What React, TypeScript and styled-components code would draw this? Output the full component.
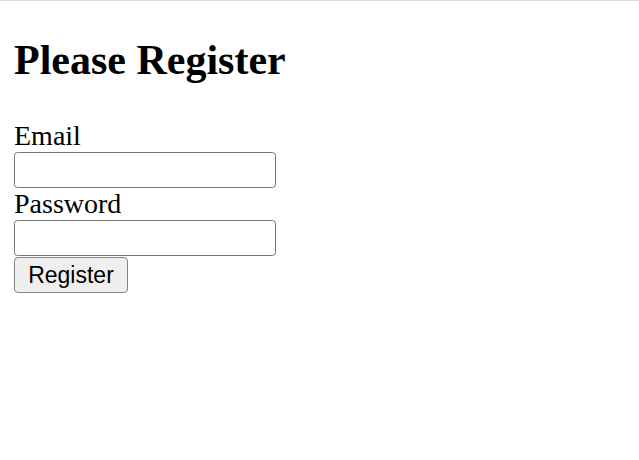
import React from "react";
import styled, { createGlobalStyle } from "styled-components";

const GlobalStyle = createGlobalStyle`
  html, body {
    margin: 0;
    padding: 0;
    background: #ffffff;
  }
  body {
    font-family: "Liberation Serif", "Times New Roman", serif;
    color: #000000;
  }
`;

const Page = styled.main`
  border-top: 1px solid #dcdcdc;
  padding: 0 14px;
`;

const Title = styled.h1`
  margin: 35px 0 36px;
  font-family: "Liberation Serif", "Times New Roman", serif;
  font-size: 42px;
  line-height: 48px;
  font-weight: 700;
`;

const Form = styled.form`
  display: flex;
  flex-direction: column;
  align-items: flex-start;
`;

const Label = styled.label`
  font-family: "Liberation Serif", "Times New Roman", serif;
  font-size: 28px;
  line-height: 32px;
`;

const Field = styled.input`
  box-sizing: border-box;
  width: 262px;
  height: 36px;
  margin: 0;
  padding: 2px 4px;
  border: 1.75px solid #767676;
  border-radius: 3.5px;
  background: #ffffff;
  font-family: "Liberation Sans", Arial, sans-serif;
  font-size: 23px;
  outline: none;
`;

const SubmitButton = styled.button`
  box-sizing: border-box;
  width: 114px;
  height: 36px;
  margin-top: 1px;
  padding: 0 10px;
  border: 1.75px solid #858585;
  border-radius: 4px;
  background: #efefef;
  color: #000000;
  font-family: "Liberation Sans", Arial, sans-serif;
  font-size: 23px;
  line-height: 1;
  cursor: pointer;
`;

export default function App() {
  return (
    <>
      <GlobalStyle />
      <Page>
        <Title>Please Register</Title>
        <Form onSubmit={(e) => e.preventDefault()}>
          <Label htmlFor="email">Email</Label>
          <Field id="email" type="email" />
          <Label htmlFor="password">Password</Label>
          <Field id="password" type="password" />
          <SubmitButton type="submit">Register</SubmitButton>
        </Form>
      </Page>
    </>
  );
}
